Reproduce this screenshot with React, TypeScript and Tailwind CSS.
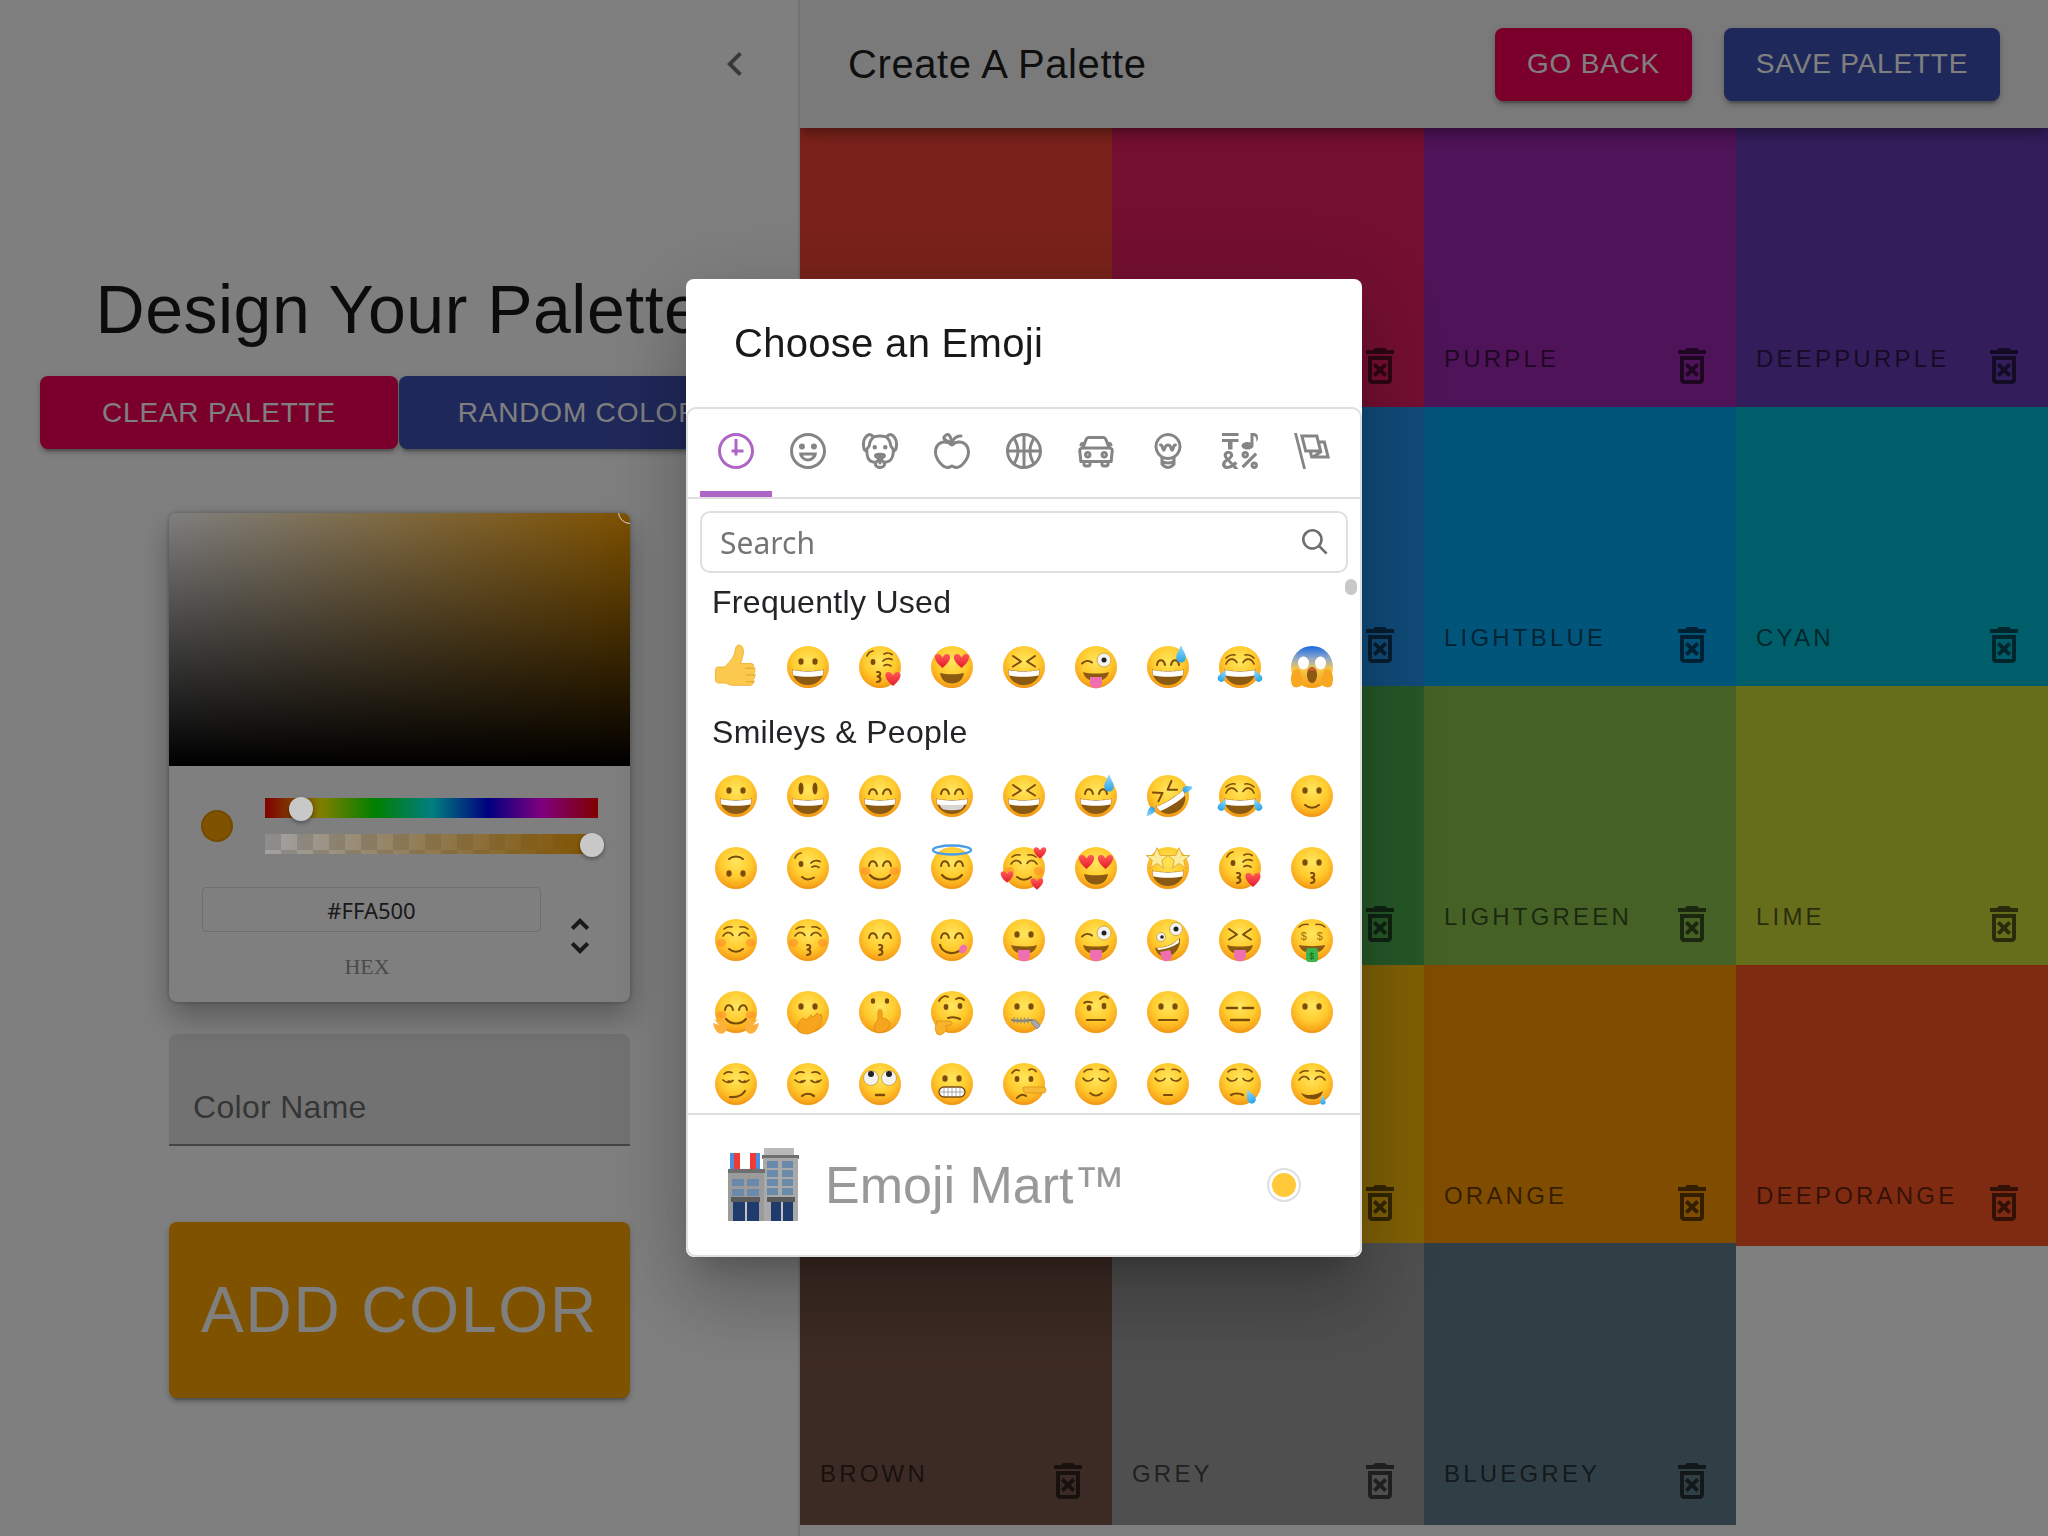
import type { ReactNode } from "react";

const BROWN = "#7b4c0b";
const BTN_SHADOW =
  "shadow-[0_6px_2px_-4px_rgba(0,0,0,0.2),0_4px_4px_0_rgba(0,0,0,0.14),0_2px_10px_0_rgba(0,0,0,0.12)]";

const COLORS: { name: string; bg: string }[] = [
  { name: "red", bg: "bg-[#f44336]" },
  { name: "pink", bg: "bg-[#e91e63]" },
  { name: "purple", bg: "bg-[#9c27b0]" },
  { name: "deeppurple", bg: "bg-[#673ab7]" },
  { name: "indigo", bg: "bg-[#3f51b5]" },
  { name: "blue", bg: "bg-[#2196f3]" },
  { name: "lightblue", bg: "bg-[#03a9f4]" },
  { name: "cyan", bg: "bg-[#00bcd4]" },
  { name: "teal", bg: "bg-[#009688]" },
  { name: "green", bg: "bg-[#4caf50]" },
  { name: "lightgreen", bg: "bg-[#8bc34a]" },
  { name: "lime", bg: "bg-[#cddc39]" },
  { name: "yellow", bg: "bg-[#ffeb3b]" },
  { name: "amber", bg: "bg-[#ffc107]" },
  { name: "orange", bg: "bg-[#ff9800]" },
  { name: "deeporange", bg: "bg-[#ff5722]" },
  { name: "brown", bg: "bg-[#795548]" },
  { name: "grey", bg: "bg-[#9e9e9e]" },
  { name: "bluegrey", bg: "bg-[#607d8b]" },
];

// emoji parts, all drawn on a 48 x 48 box with the face at 24,24 r21
function S({ d, w = 2, c = BROWN }: { d: string; w?: number; c?: string }) {
  return (
    <path d={d} fill="none" stroke={c} strokeWidth={w} strokeLinecap="round" strokeLinejoin="round" />
  );
}

function Heart({ x, y, s = 1 }: { x: number; y: number; s?: number }) {
  return (
    <path
      transform={`translate(${x} ${y}) scale(${s})`}
      d="M0 6C-8 0-8-6-4-6c2 0 3 1.500 4 3 1-1.500 2-3 4-3 4 0 4 6-4 12z"
      fill="url(#ej-heart)"
    />
  );
}

function Drop({ x, y, s = 1, r = 0 }: { x: number; y: number; s?: number; r?: number }) {
  return (
    <path
      transform={`translate(${x} ${y}) rotate(${r}) scale(${s})`}
      d="M0-9C2-4 4-2 4 1.500a4 4 0 0 1-8 0C-4-2-2-4 0-9z"
      fill="url(#ej-drop)"
    />
  );
}

function Star({ x, y }: { x: number; y: number }) {
  return (
    <polygon
      transform={`translate(${x} ${y}) scale(1.25)`}
      points="0,-9 2.600,-2.800 8.600,-2.800 3.800,1.100 5.300,7.300 0,3.600 -5.300,7.300 -3.800,1.100 -8.600,-2.800 -2.600,-2.800"
      fill="#fdeb9c"
      stroke="#e0a22c"
      strokeWidth={0.7}
    />
  );
}

const dots = (
  <g fill={BROWN}>
    <ellipse cx="17" cy="18.500" rx="2.600" ry="3.200" />
    <ellipse cx="31" cy="18.500" rx="2.600" ry="3.200" />
  </g>
);
const tall = (
  <g fill={BROWN}>
    <ellipse cx="17" cy="16.500" rx="2.500" ry="6" />
    <ellipse cx="31" cy="16.500" rx="2.500" ry="6" />
  </g>
);
const arcs = <S d="M13 22c.8-6.500 6.800-6.500 8 0M27 22c1.200-6.500 7.200-6.500 8 0" />;
const xs = <S d="M13 13l8 5.500-8 5M35 13l-8 5.500 8 5" />;
const joyEyes = <S d="M10 21c2.500-6 8-6.500 11-1.500M27 19.500c3-5 8.500-4.500 11 1.500M10 15c3-3 7-3.500 9-3M38 15c-3-3-7-3.500-9-3" w={1.600} />;
const closedUp = <S d="M11 20c3-4.500 7.500-4.500 10-.5M27 19.500c2.500-4 7-4 10 .5M12 13c3-2.500 6-2.500 8-2M36 13c-3-2.500-6-2.500-8-2" w={1.600} />;
const closedDown = <S d="M11 18c2.500 4 7.500 4 10 .5M27 18.500c2.500 3.500 7.500 3.500 10-.5M12 12c2-2.500 5-3 8-2.500M36 12c-2-2.500-5-3-8-2.500" w={1.600} />;
const cheeks = (
  <g fill="#ff8a2c" opacity={0.55}>
    <ellipse cx="9.500" cy="27" rx="5" ry="4" />
    <ellipse cx="38.500" cy="27" rx="5" ry="4" />
  </g>
);
const grin = (
  <>
    <path d="M8 26.500c6 2 26 2 32 0-.3 9.500-7 15.500-16 15.500S8.300 36 8 26.500z" fill="#8a5a12" />
    <path d="M8.500 27c6 1.900 25 1.900 31 0 0 2.200-.4 4-1 5.500-8 1.800-21 1.800-29 0-.6-1.500-1-3.300-1-5.500z" fill="#fff" />
  </>
);
const beamTeeth = <path d="M11.500 32.500c8 1.500 17 1.500 25 0-1 2.500-2.500 4-4 5-5 1-12 1-17 0-1.500-1-3-2.500-4-5z" fill="#d5d5d5" />;
const smallSmile = <S d="M17 33c4 3.500 10 3.500 14 0" />;
const wideSmile = <S d="M14 31c5 6 15 6 20 0" w={2.200} />;
const kiss = <S d="M23 29c4-.8 4.500 3.500.5 4.500 4 .8 4 5-.5 5.500" />;
const tongueMouth = (
  <>
    <path d="M11 29c6 2 20 2 26 0-1.500 6-6 9-13 9s-11.500-3-13-9z" fill="#8a5a12" />
    <path d="M18 34h12v5.500a6 6 0 0 1-12 0z" fill="#ef6fb0" />
  </>
);
const winkTongueEyes = (
  <>
    <S d="M10 20.500c3-3 7-3.500 10-1" />
    <circle cx="32" cy="17" r="7" fill="#f2f2f2" stroke="#c99a2e" strokeWidth={0.8} />
    <circle cx="32" cy="17" r="2.500" fill="#222" />
  </>
);
const kissWink = (
  <>
    <ellipse cx="17" cy="19" rx="2.400" ry="3" fill={BROWN} />
    <S d="M11 13c1-3 3-4.500 6-5M27 18c2-2.500 6-3 9-1.500M28 22.500c2-1 5-1 7 .5M28 11c3-1.500 6-1 8 .5" w={1.700} />
  </>
);

const FACES: Record<string, ReactNode> = {
  grinning: <>{dots}{grin}</>,
  smiley: <>{tall}{grin}</>,
  smile: <>{arcs}{grin}</>,
  beam: <>{arcs}{grin}{beamTeeth}</>,
  laughing: <>{xs}{grin}</>,
  sweat: <>{arcs}{grin}<Drop x={37} y={13} s={1.200} /></>,
  joy: <>{joyEyes}{grin}<Drop x={6} y={34} s={0.900} r={30} /><Drop x={42} y={34} s={0.900} r={-30} /></>,
  rofl: (
    <>
      <g transform="rotate(-32 24 24)">{xs}{grin}</g>
      <Drop x={43} y={17} s={0.800} r={70} />
      <Drop x={7} y={39} s={0.800} r={-140} />
    </>
  ),
  slight: <>{dots}{smallSmile}</>,
  upside: <g transform="rotate(180 24 24)">{dots}{smallSmile}</g>,
  wink: (
    <>
      <ellipse cx="17" cy="20" rx="2.400" ry="3" fill={BROWN} />
      <S d="M11 14c1-3 3-4.500 6-5M27 19c2-2.500 6-3 9-1.500M28 23c2-1 5-1 7 .5" w={1.700} />
      <S d="M18 33c3.500 3 8 3 12 .5" />
    </>
  ),
  blush: <>{cheeks}{arcs}{wideSmile}</>,
  halo: (
    <>
      {arcs}
      {wideSmile}
      <ellipse cx="24" cy="6" rx="19" ry="4.500" fill="none" stroke="#4a9be8" strokeWidth={2.400} />
    </>
  ),
  hearts: (
    <>
      {cheeks}
      {closedUp}
      {smallSmile}
      <Heart x={40} y={9} s={0.950} />
      <Heart x={7} y={33} s={0.950} />
      <Heart x={37} y={40} s={0.950} />
    </>
  ),
  heartEyes: (
    <>
      <path d="M12 30c6 1.800 18 1.800 24 0-1 6.500-5.500 10.500-12 10.500S13 36.500 12 30z" fill="#8a5a12" />
      <Heart x={14.500} y={18} s={1.150} />
      <Heart x={33.500} y={18} s={1.150} />
    </>
  ),
  star: <>{grin}<Star x={13} y={15} /><Star x={35} y={15} /></>,
  kissHeart: <>{kissWink}<S d="M21 29c4-.8 4.500 3.500.5 4.500 4 .8 4 5-.5 5.500" /><Heart x={37} y={36} s={1.150} /></>,
  kissing: <>{dots}{kiss}</>,
  relaxed: <>{cheeks}{closedUp}{smallSmile}</>,
  kissClosed: <>{cheeks}{closedUp}{kiss}</>,
  kissSmile: <>{arcs}{kiss}</>,
  yum: (
    <>
      {arcs}
      <S d="M12 29c3 9 15 11 23 3" w={2.200} />
      <ellipse cx="35" cy="33" rx="3.600" ry="4.500" transform="rotate(35 35 33)" fill="#ef6fb0" />
    </>
  ),
  tongue: <>{dots}{tongueMouth}</>,
  tongueWink: <>{winkTongueEyes}{tongueMouth}</>,
  zany: (
    <>
      <circle cx="17" cy="21" r="4.500" fill="#f2f2f2" stroke="#c99a2e" strokeWidth={0.8} />
      <circle cx="18" cy="21" r="1.800" fill="#222" />
      <circle cx="32" cy="13" r="6.500" fill="#f2f2f2" stroke="#c99a2e" strokeWidth={0.8} />
      <circle cx="32" cy="13" r="2.500" fill="#222" />
      <path d="M11 32c8 0 18-3 25-10 1 9-5 18-14 19-5 0-9-3-11-9z" fill="#8a5a12" />
      <path d="M13 32c8 0 16-3 22-9 0 1.500 0 3-.5 4-6 4-13 6-20 7z" fill="#fff" />
      <path d="M16 36l10-2 2 6a5.500 5.500 0 0 1-10 3z" fill="#ef6fb0" />
    </>
  ),
  squintTongue: <>{xs}{tongueMouth}</>,
  money: (
    <>
      <S d="M11 11c3-2.500 6-3 9-2.500M37 11c-3-2.500-6-3-9-2.500" w={1.500} />
      <text x="16" y="24" fontSize="11" fontFamily="Liberation Sans" textAnchor="middle" fill="#9a6a10">$</text>
      <text x="32" y="24" fontSize="11" fontFamily="Liberation Sans" textAnchor="middle" fill="#9a6a10">$</text>
      <path d="M11 29c6 1.500 20 1.500 26 0-1 5-6 8-13 8s-12-3-13-8z" fill="#8a5a12" />
      <rect x="18" y="32" width="12" height="14" rx="3" fill="#3eb54a" />
      <text x="24" y="42.500" fontSize="9" fontFamily="Liberation Sans" textAnchor="middle" fill="#145f1c">$</text>
    </>
  ),
  hug: (
    <>
      {cheeks}
      {arcs}
      {wideSmile}
      <path d="M1 35l6 2-5-6 7 3-3-6 7 6c3 3 3 8-1 11-4 2-9 0-11-10z" fill="#fbb13a" />
      <path d="M47 35l-6 2 5-6-7 3 3-6-7 6c-3 3-3 8 1 11 4 2 9 0 11-10z" fill="#fbb13a" />
    </>
  ),
  oops: (
    <>
      {dots}
      <path d="M14 43c-1-6 1-11 5-13l3 2 5-5 2 2 4-4 2 2 2-1 1 3c0 8-6 15-14 17-4 0-8-1-10-3z" fill="#f7a51e" stroke="#d98a16" strokeWidth={0.8} />
    </>
  ),
  shush: (
    <>
      <g fill={BROWN}>
        <ellipse cx="17" cy="13" rx="2.200" ry="2.800" />
        <ellipse cx="31" cy="13" rx="2.200" ry="2.800" />
      </g>
      <path d="M20 44c-3-4-1-9 2-12V24c0-3.500 4-3.500 4 0v6c5 1 8 3 8 6-1 4-4 7-7 8-2 1-5 1-7 0z" fill="#f7a51e" stroke="#d98a16" strokeWidth={0.9} />
    </>
  ),
  thinking: (
    <>
      <S d="M11 13c2-4 6-6 9-4M28 11c3-1.500 6-1 8 1" w={1.800} />
      <ellipse cx="18" cy="19" rx="2.400" ry="3" fill={BROWN} />
      <ellipse cx="32" cy="18" rx="2.400" ry="3" fill={BROWN} />
      <S d="M20 30c3-.8 8-.8 12 1" />
      <path d="M9 46c-2-4-2-7-1-10l1-3 12 0c3 0 4 3 2 4l-6 1 2 2c0 3-4 6-7 7z" fill="#f9b22c" stroke="#d98a16" strokeWidth={0.8} />
    </>
  ),
  zipper: (
    <>
      {dots}
      <S d="M12 32c6 1 14 1 20 0" w={2} c="#7d7d7d" />
      <S d="M14 29.500v5M17.500 30v5M21 30v5M24.500 30v5M28 30v5" w={1.200} c="#8d8d8d" />
      <rect x="33" y="32" width="5" height="9" rx="1.500" transform="rotate(-40 35 36)" fill="#a8a8a8" stroke="#777" strokeWidth={0.7} />
    </>
  ),
  raised: (
    <>
      <S d="M12 15c2-1.500 5-1.500 8-.5M28 11c2-3 6-3.500 8-1" w={1.800} />
      <ellipse cx="17" cy="20" rx="2.400" ry="3" fill={BROWN} />
      <ellipse cx="32" cy="18" rx="2.400" ry="3.200" fill={BROWN} />
      <S d="M15 32h18" w={2.200} />
    </>
  ),
  neutral: <>{dots}<S d="M15 32h18" w={2.200} /></>,
  expressionless: <><S d="M11 20h10M27 20h10M15 32h18" w={2.400} /></>,
  noMouth: dots,
  smirk: (
    <>
      <S d="M11 20c3 3 7 3 10 .5M27 20.500c3 2.500 7 2.500 10-.5M12 14c2-2 5-2.500 8-1.500M36 14c-2-2-5-2.500-8-1.500" w={1.700} />
      <ellipse cx="17" cy="21.500" rx="1.800" ry="1.200" fill={BROWN} />
      <ellipse cx="33" cy="21.500" rx="1.800" ry="1.200" fill={BROWN} />
      <S d="M18 37c6 .5 12-1 15-6" w={2.200} />
    </>
  ),
  unamused: (
    <>
      <S d="M11 20c3 3 7 3 10 .5M27 20.500c3 2.500 7 2.500 10-.5M12 14c2-2 5-2.500 8-1.500M36 14c-2-2-5-2.500-8-1.500" w={1.700} />
      <ellipse cx="18" cy="21.500" rx="1.800" ry="1.200" fill={BROWN} />
      <ellipse cx="34" cy="21.500" rx="1.800" ry="1.200" fill={BROWN} />
      <S d="M18 36c3-3 8-3 12 0" w={2.200} />
    </>
  ),
  roll: (
    <>
      <circle cx="15" cy="18" r="7.500" fill="#f2f2f2" stroke="#c99a2e" strokeWidth={0.8} />
      <circle cx="33" cy="18" r="7.500" fill="#f2f2f2" stroke="#c99a2e" strokeWidth={0.8} />
      <circle cx="15" cy="14" r="3" fill="#222" />
      <circle cx="33" cy="14" r="3" fill="#222" />
      <S d="M20 35h8" w={2.400} />
    </>
  ),
  grimace: (
    <>
      {dots}
      <rect x="11" y="27" width="26" height="10" rx="5" fill="#fff" stroke={BROWN} strokeWidth={1.400} />
      <S d="M12 32h24M16 27.500v9M20 27v10M24 27v10M28 27v10M32 27.500v9" w={0.700} c="#8c8c8c" />
    </>
  ),
  lying: (
    <>
      <S d="M12 13c2-3 5-3.500 7-2.500M29 10c2-1.500 5-1 7 1.500" w={1.700} />
      <ellipse cx="17" cy="19" rx="2.400" ry="3" fill={BROWN} />
      <ellipse cx="31" cy="19" rx="2.400" ry="3" fill={BROWN} />
      <S d="M17 38c3-4 7-4 9-2" />
      <path d="M24 27h20c2.500 0 2.500 6 0 6H26c-3 0-4-6-2-6z" fill="#f8b932" stroke="#d98a16" strokeWidth={0.7} />
    </>
  ),
  relieved: <>{closedDown}<S d="M18 33c4 3.500 8 3.500 12 0" w={1.800} /></>,
  pensive: <>{closedDown}<S d="M20 35h8" w={2.200} /></>,
  sleepy: (
    <>
      {closedDown}
      <S d="M15 35c3-2 9-2 12 0" w={2.200} />
      <Drop x={35} y={38} s={1.050} r={-25} />
    </>
  ),
  drool: (
    <>
      {closedUp}
      <path d="M13 33c5 3 15 3 22-2-2 7-7 9-12 8-5 0-8-3-10-6z" fill={BROWN} />
      <Drop x={35} y={41} s={0.650} />
    </>
  ),
};

function Thumb() {
  return (
    <svg viewBox="0 0 42 42" className="h-12 w-12">
      <path
        d="M3 24c0-2 1-3 3-3h5c3-3 8-8 9-13 .5-3 .5-5 2.500-6 3-1 5 2 5 5 0 4-1.500 8-2.500 11h9c3 0 3 3 2 4 2 1 2 4 .5 5 1.500 1.500 1 4-.5 5 1 2 0 5-2.500 5H18c-3 0-5-2-7-2H6c-2 0-3-1-3-3z"
        fill="#fcc94f"
        stroke="#eeb033"
        strokeWidth={0.8}
      />
      <S d="M29 22h9M30 28h8M30 34h7" w={0.9} c="#e3a12c" />
    </svg>
  );
}

function Scream() {
  return (
    <svg viewBox="0 0 48 48" className="h-12 w-12">
      <circle cx="24" cy="24" r="21" fill="url(#ej-scream)" />
      <ellipse cx="15.500" cy="20" rx="5.500" ry="6.500" fill="#fff" />
      <ellipse cx="32.500" cy="20" rx="5.500" ry="6.500" fill="#fff" />
      <ellipse cx="24" cy="32" rx="5" ry="8" fill="#8a5a12" />
      <path d="M24 25c3 0 4.500 2 4.500 3-3-1-6-1-9 0 0-1 1.500-3 4.500-3z" fill="#d9533a" />
      <path d="M4 42c-2-6-1-12 2-15 2-2 5-1 6 1l3 8c1 3 0 5-2 7-2 1-3 1-3 1-2 1-5 0-6-2z" fill="#f8a721" />
      <path d="M44 42c2-6 1-12-2-15-2-2-5-1-6 1l-3 8c-1 3 0 5 2 7 2 1 3 1 3 1 2 1 5 0 6-2z" fill="#f8a721" />
    </svg>
  );
}

function Emoji({ name }: { name: string }) {
  if (name === "thumb") return <Thumb />;
  if (name === "scream") return <Scream />;
  return (
    <svg viewBox="0 0 48 48" className="h-12 w-12">
      <circle cx="24" cy="24" r="21" fill="url(#ej-face)" />
      {FACES[name]}
    </svg>
  );
}

function Building() {
  return (
    <svg viewBox="0 0 72 73" className="h-[73px] w-[72px]">
      <rect x="37" y="0" width="30" height="9" fill="#b9b9b9" />
      <rect x="35" y="7" width="37" height="4" fill="#6f6f6f" />
      <rect x="36" y="10" width="35" height="63" fill="#a9a9a9" />
      <rect x="3" y="5" width="30" height="16" fill="#fff" />
      <rect x="3" y="5" width="4" height="16" fill="#4a8fe0" />
      <rect x="7" y="5" width="6" height="16" fill="#ef3b36" />
      <rect x="23" y="5" width="6" height="16" fill="#ef3b36" />
      <rect x="29" y="5" width="4" height="16" fill="#4a8fe0" />
      <rect x="1" y="21" width="37" height="4" fill="#6f6f6f" />
      <rect x="1" y="25" width="36" height="48" fill="#9b9b9b" />
      {[31, 41].map((y) => (
        <g key={y} fill="#6a8aab">
          <rect x="5" y={y} width="12" height="7" />
          <rect x="20" y={y} width="12" height="7" />
        </g>
      ))}
      {[13, 22, 31, 40].map((y) => (
        <g key={y} fill="#6a8aab">
          <rect x="40" y={y} width="11" height="7" />
          <rect x="55" y={y} width="11" height="7" />
        </g>
      ))}
      <rect x="4" y="49" width="29" height="5" fill="#5a5a5a" />
      <rect x="6" y="54" width="26" height="19" fill="#1f3b6e" />
      <rect x="18" y="54" width="2" height="19" fill="#c3c3c3" />
      <rect x="40" y="49" width="28" height="5" fill="#5a5a5a" />
      <rect x="44" y="54" width="22" height="19" fill="#1f3b6e" />
      <rect x="54" y="54" width="2" height="19" fill="#c3c3c3" />
    </svg>
  );
}

// emoji-mart category icons, 24 x 24
const ANCHORS: string[][] = [
  ["M13 4h-2l-.001 7H9v2h2v2h2v-2h4v-2h-4z", "M12 0C5.373 0 0 5.373 0 12s5.373 12 12 12 12-5.373 12-12S18.627 0 12 0m0 22C6.486 22 2 17.514 2 12S6.486 2 12 2s10 4.486 10 10-4.486 10-10 10"],
  ["M12 0C5.373 0 0 5.373 0 12s5.373 12 12 12 12-5.373 12-12S18.627 0 12 0m0 22C6.486 22 2 17.514 2 12S6.486 2 12 2s10 4.486 10 10-4.486 10-10 10", "M8 7a2 2 0 1 0-.001 3.999A2 2 0 0 0 8 7M16 7a2 2 0 1 0-.001 3.999A2 2 0 0 0 16 7M15.232 15c-.693 1.195-1.87 2-3.349 2-1.477 0-2.655-.805-3.347-2H15m3-2H6a6 6 0 1 0 12 0"],
  ["M15.5 8a1.5 1.5 0 1 0 .001 3.001A1.5 1.5 0 0 0 15.5 8M8.5 8a1.5 1.5 0 1 0 .001 3.001A1.5 1.5 0 0 0 8.5 8", "M18.933 0h-.027c-.97 0-2.138.787-3.018 1.497-1.274-.374-2.612-.51-3.887-.51-1.285 0-2.616.133-3.874.517C7.245.79 6.069 0 5.093 0h-.027C3.352 0 .07 2.67.002 7.026c-.039 2.479.276 4.238 1.04 5.013.254.258.882.677 1.295.882.191 3.177.922 5.238 2.536 6.38.897.637 2.187.949 3.2 1.102C8.04 20.6 8 20.795 8 21c0 1.773 2.35 3 4 3 1.648 0 4-1.227 4-3 0-.201-.038-.393-.072-.586 2.573-.385 5.435-1.877 5.925-7.587.396-.22.887-.568 1.104-.788.763-.774 1.079-2.534 1.04-5.013C23.929 2.67 20.646 0 18.933 0M3.223 9.135c-.237.281-.837 1.155-.884 1.238-.15-.41-.368-1.349-.337-3.291.051-3.281 2.478-4.972 3.091-5.031.256.015.731.27 1.265.646-1.11 1.171-2.275 2.915-2.352 5.125-.133.546-.398.858-.783 1.313M12 22c-.901 0-1.954-.693-2-1 0-.654.475-1.236 1-1.602V20a1 1 0 1 0 2 0v-.602c.524.365 1 .947 1 1.602-.046.307-1.099 1-2 1m3-3.48v.02a4.752 4.752 0 0 0-1.262-1.02c1.092-.516 2.239-1.334 2.239-2.217 0-1.842-1.781-2.195-3.977-2.195-2.196 0-3.978.354-3.978 2.195 0 .883 1.148 1.701 2.238 2.217A4.8 4.8 0 0 0 9 18.539v-.025c-1-.076-2.182-.281-2.973-.842-1.301-.92-1.838-3.045-1.853-6.478l.023-.041c.496-.826 1.49-1.45 1.804-3.102 0-2.047 1.357-3.631 2.362-4.522C9.37 3.178 10.555 3 11.948 3c1.447 0 2.685.192 3.733.57 1 .9 2.316 2.465 2.316 4.48.313 1.651 1.307 2.275 1.803 3.102.035.058.068.117.102.178-.059 5.967-1.949 7.01-4.902 7.19m6.628-8.202c-.037-.065-.074-.13-.113-.195a7.587 7.587 0 0 0-.739-.987c-.385-.455-.648-.768-.782-1.313-.076-2.209-1.241-3.954-2.353-5.124.531-.376 1.004-.63 1.261-.647.636.071 3.044 1.764 3.096 5.031.027 1.81-.347 3.218-.37 3.235"],
  ["M17 4.978c-1.838 0-2.876.396-3.68.934.513-1.172 1.768-2.934 4.68-2.934a1 1 0 0 0 0-2c-2.921 0-4.629 1.365-5.547 2.512-.064.078-.119.162-.18.244C11.73 1.838 10.798.023 9.207.023 8.579.022 7.85.306 7 .978 5.027 2.54 5.329 3.902 6.492 4.999 3.609 5.222 0 7.352 0 12.969c0 4.582 4.961 11.009 9 11.009 1.975 0 2.371-.486 3-1 .629.514 1.025 1 3 1 4.039 0 9-6.418 9-11 0-5.953-4.055-8-7-8M8.242 2.546c.641-.508.943-.523.965-.523.426.169.975 1.405 1.357 3.055-1.527-.629-2.741-1.352-2.98-1.846.059-.112.241-.356.658-.686M15 21.978c-1.08 0-1.21-.109-1.559-.402l-.176-.146c-.367-.302-.816-.452-1.266-.452s-.898.15-1.266.452l-.176.146c-.347.292-.477.402-1.557.402-2.813 0-7-5.389-7-9.009 0-5.823 4.488-5.991 5-5.991 1.939 0 2.484.471 3.387 1.251l.323.276a1.995 1.995 0 0 0 2.58 0l.323-.276c.902-.78 1.447-1.251 3.387-1.251.512 0 5 .168 5 6 0 3.617-4.187 9-7 9"],
  ["M12 0C5.373 0 0 5.372 0 12c0 6.627 5.373 12 12 12 6.628 0 12-5.373 12-12 0-6.628-5.372-12-12-12m9.949 11H17.05c.224-2.527 1.232-4.773 1.968-6.113A9.966 9.966 0 0 1 21.949 11M13 11V2.051a9.945 9.945 0 0 1 4.432 1.564c-.858 1.491-2.156 4.22-2.392 7.385H13zm-2 0H8.961c-.238-3.165-1.536-5.894-2.393-7.385A9.95 9.95 0 0 1 11 2.051V11zm0 2v8.949a9.937 9.937 0 0 1-4.432-1.564c.857-1.492 2.155-4.221 2.393-7.385H11zm4.04 0c.236 3.164 1.534 5.893 2.392 7.385A9.92 9.92 0 0 1 13 21.949V13h2.04zM4.982 4.887C5.718 6.227 6.726 8.473 6.951 11h-4.9a9.977 9.977 0 0 1 2.931-6.113M2.051 13h4.9c-.226 2.527-1.233 4.771-1.969 6.113A9.972 9.972 0 0 1 2.051 13m16.967 6.113c-.735-1.342-1.744-3.586-1.968-6.113h4.899a9.961 9.961 0 0 1-2.931 6.113"],
  ["M6.5 12C5.122 12 4 13.121 4 14.5S5.122 17 6.5 17 9 15.879 9 14.5 7.878 12 6.5 12m0 3c-.275 0-.5-.225-.5-.5s.225-.5.5-.5.5.225.5.5-.225.5-.5.5M17.5 12c-1.378 0-2.5 1.121-2.5 2.5s1.122 2.5 2.5 2.5 2.5-1.121 2.5-2.5-1.122-2.5-2.5-2.5m0 3c-.275 0-.5-.225-.5-.5s.225-.5.5-.5.5.225.5.5-.225.5-.5.5", "M22.482 9.494l-1.039-.346L21.4 9h.6c.552 0 1-.439 1-.992 0-.006-.003-.008-.003-.008H23c0-1-.889-2-1.984-2h-.642l-.731-1.717C19.262 3.012 18.091 2 16.764 2H7.236C5.909 2 4.738 3.012 4.357 4.283L3.626 6h-.642C1.889 6 1 7 1 8h.003S1 8.002 1 8.008C1 8.561 1.448 9 2 9h.6l-.043.148-1.039.346a2.001 2.001 0 0 0-1.359 2.097l.751 7.508a1 1 0 0 0 .994.901H3v1c0 1.103.896 2 2 2h2c1.104 0 2-.897 2-2v-1h6v1c0 1.103.896 2 2 2h2c1.104 0 2-.897 2-2v-1h1.096a.999.999 0 0 0 .994-.901l.751-7.508a2.001 2.001 0 0 0-1.359-2.097M6.273 4.857C6.402 4.43 6.788 4 7.236 4h9.527c.448 0 .834.43.963.857L19.313 9H4.688l1.585-4.143zM7 21H5v-1h2v1zm12 0h-2v-1h2v1zm2.189-3H2.811l-.662-6.607L3 11h18l.852.393L21.189 18z"],
  ["M12 0a9 9 0 0 0-5 16.482V21s2.035 3 5 3 5-3 5-3v-4.518A9 9 0 0 0 12 0zm0 2c3.86 0 7 3.141 7 7s-3.14 7-7 7-7-3.141-7-7 3.14-7 7-7zM9 17.477c.94.332 1.946.523 3 .523s2.06-.19 3-.523v.834c-.91.436-1.925.689-3 .689a6.924 6.924 0 0 1-3-.69v-.833zm.236 3.07A8.854 8.854 0 0 0 12 21c.965 0 1.888-.167 2.758-.451C14.155 21.173 13.153 22 12 22c-1.102 0-2.117-.789-2.764-1.453z", "M14.745 12.449h-.004c-.852-.024-1.188-.858-1.577-1.824-.421-1.061-.703-1.561-1.182-1.566h-.009c-.481 0-.783.497-1.235 1.537-.436.982-.801 1.811-1.636 1.791l-.276-.043c-.565-.171-.853-.691-1.284-1.794-.125-.313-.202-.632-.27-.913-.051-.213-.127-.53-.195-.634C7.067 9.004 7.039 9 6.99 9A1 1 0 0 1 7 7h.01c1.662.017 2.015 1.373 2.198 2.134.486-.981 1.304-2.058 2.797-2.075 1.531.018 2.28 1.153 2.731 2.141l.002-.008C14.944 8.424 15.327 7 16.979 7h.032A1 1 0 1 1 17 9h-.011c-.149.076-.256.474-.319.709a6.484 6.484 0 0 1-.311.951c-.429.973-.79 1.789-1.614 1.789"],
  ["M0 0h11v2H0zM4 11h3V6h4V4H0v2h4zM15.5 17c1.381 0 2.5-1.116 2.5-2.493s-1.119-2.493-2.5-2.493S13 13.13 13 14.507 14.119 17 15.5 17m0-2.986c.276 0 .5.222.5.493 0 .272-.224.493-.5.493s-.5-.221-.5-.493.224-.493.5-.493M21.5 19.014c-1.381 0-2.5 1.116-2.5 2.493S20.119 24 21.5 24s2.5-1.116 2.5-2.493-1.119-2.493-2.5-2.493m0 2.986a.497.497 0 0 1-.5-.493c0-.271.224-.493.5-.493s.5.222.5.493a.497.497 0 0 1-.5.493M22 13l-9 9 1.513 1.5 8.99-9.009zM17 11c2.209 0 4-1.119 4-2.5V2s.985-.161 1.498.949C23.01 4.055 23 6 23 6s1-1.119 1-3.135C24-.02 21 0 21 0h-2v6.347A5.853 5.853 0 0 0 17 6c-2.209 0-4 1.119-4 2.5s1.791 2.5 4 2.5M10.297 20.482l-1.475-1.585a47.54 47.54 0 0 1-1.442 1.129c-.307-.288-.989-1.016-2.045-2.183.902-.836 1.479-1.466 1.729-1.892s.376-.871.376-1.336c0-.592-.273-1.178-.818-1.759-.546-.581-1.329-.871-2.349-.871-1.008 0-1.79.293-2.344.879-.556.587-.832 1.181-.832 1.784 0 .813.419 1.748 1.256 2.805-.847.614-1.444 1.208-1.794 1.784a3.465 3.465 0 0 0-.523 1.833c0 .857.308 1.56.924 2.107.616.549 1.423.823 2.42.823 1.173 0 2.444-.379 3.813-1.137L8.235 24h2.819l-2.09-2.383 1.333-1.135zm-6.736-6.389a1.02 1.02 0 0 1 .73-.286c.31 0 .559.085.747.254a.849.849 0 0 1 .283.659c0 .518-.419 1.112-1.257 1.784-.536-.651-.805-1.231-.805-1.742a.901.901 0 0 1 .302-.669M3.74 22c-.427 0-.778-.116-1.057-.349-.279-.232-.418-.487-.418-.766 0-.594.509-1.288 1.527-2.083.968 1.134 1.717 1.946 2.248 2.438-.921.507-1.686.76-2.3.76"],
  ["M0 0l6.084 24H8L1.916 0zM21 5h-4l-1-4H4l3 12h3l1 4h13L21 5zM6.563 3h7.875l2 8H8.563l-2-8zm8.832 10l-2.856 1.904L12.063 13h3.332zM19 13l-1.5-6h1.938l2 8H16l3-2z"],
];

const FREQUENT = ["thumb", "grinning", "kissHeart", "heartEyes", "laughing", "tongueWink", "sweat", "joy", "scream"];
const SMILEYS = [
  "grinning", "smiley", "smile", "beam", "laughing", "sweat", "rofl", "joy", "slight",
  "upside", "wink", "blush", "halo", "hearts", "heartEyes", "star", "kissHeart", "kissing",
  "relaxed", "kissClosed", "kissSmile", "yum", "tongue", "tongueWink", "zany", "squintTongue", "money",
  "hug", "oops", "shush", "thinking", "zipper", "raised", "neutral", "expressionless", "noMouth",
  "smirk", "unamused", "roll", "grimace", "lying", "relieved", "pensive", "sleepy", "drool",
];

function EmojiGrid({ names }: { names: string[] }) {
  return (
    <div className="grid grid-cols-[repeat(9,72px)] auto-rows-[72px] pl-3">
      {names.map((name, index) => (
        <div key={index} className="flex items-center justify-center">
          <Emoji name={name} />
        </div>
      ))}
    </div>
  );
}

function EmojiDefs() {
  return (
    <svg className="absolute h-0 w-0">
      <defs>
        <radialGradient id="ej-face" cx="50%" cy="36%" r="66%">
          <stop offset="0%" stopColor="#ffe65e" />
          <stop offset="55%" stopColor="#ffcb2d" />
          <stop offset="85%" stopColor="#f9a81b" />
          <stop offset="100%" stopColor="#ea8c10" />
        </radialGradient>
        <linearGradient id="ej-scream" x1="0" y1="0" x2="0" y2="1">
          <stop offset="0%" stopColor="#1668e0" />
          <stop offset="30%" stopColor="#93aac8" />
          <stop offset="55%" stopColor="#f6c84a" />
          <stop offset="100%" stopColor="#f49c14" />
        </linearGradient>
        <linearGradient id="ej-heart" x1="0" y1="0" x2="0" y2="1">
          <stop offset="0%" stopColor="#ff5a5a" />
          <stop offset="100%" stopColor="#e31b2b" />
        </linearGradient>
        <linearGradient id="ej-drop" x1="0" y1="0" x2="0" y2="1">
          <stop offset="0%" stopColor="#93dcff" />
          <stop offset="100%" stopColor="#2ba3e6" />
        </linearGradient>
      </defs>
    </svg>
  );
}

function ColorBox({ name, bg }: { name: string; bg: string }) {
  const tallBox = name === "deeporange" ? "h-[281px] self-start" : "";
  return (
    <div className={`flex items-start justify-between px-5 pt-[213.5px] ${bg} ${tallBox}`}>
      <span className="mt-[3px] text-[24px] uppercase leading-7 tracking-[3.2px] text-black/60">{name}</span>
      <svg viewBox="0 0 24 24" className="h-12 w-12 shrink-0 fill-black/60">
        <path d="M14.12 10.47L12 12.59l-2.13-2.12-1.41 1.41L10.59 14l-2.12 2.12 1.41 1.41L12 15.41l2.12 2.12 1.41-1.41L13.41 14l2.12-2.12zM15.5 4l-1-1h-5l-1 1H5v2h14V4zM6 19c0 1.100.9 2 2 2h8c1.100 0 2-.9 2-2V7H6v12zM8 9h8v10H8V9z" />
      </svg>
    </div>
  );
}

function ColorPicker() {
  return (
    <div className="mx-[169px] h-[489px] w-[461px] rounded-lg bg-white shadow-[0_0_4px_rgba(0,0,0,0.3),0_16px_32px_rgba(0,0,0,0.3)]">
      <div className="relative h-[253px] overflow-hidden rounded-t-lg bg-[linear-gradient(to_top,#000,transparent),linear-gradient(to_right,#fff,#ffa500)]">
        <div className="absolute right-[-12px] top-[-13px] z-50 h-6 w-6 rounded-full border border-[#d8d8d8]" />
      </div>
      <div className="flex items-center gap-8 pl-8 pr-8 pt-8">
        <div className="h-8 w-8 rounded-full bg-[#ffa500] shadow-[inset_0_0_0_2px_rgba(0,0,0,0.1)]" />
        <div className="flex flex-1 flex-col gap-4">
          <div className="relative h-5 bg-[linear-gradient(to_right,#f00_0%,#ff0_17%,#0f0_33%,#0ff_50%,#00f_67%,#f0f_83%,#f00_100%)]">
            <div className="absolute left-6 top-[-1px] z-50 h-6 w-6 rounded-full bg-[#c8c8c8] shadow-[0_2px_4px_rgba(0,0,0,0.37)]" />
          </div>
          {/* this strip stays light under the backdrop, so it sits above it with its final colours */}
          <div className="relative z-50 h-5 [background-image:linear-gradient(to_right,rgba(128,83,0,0),#805300),repeating-conic-gradient(#a2a2a2_0_25%,#8e8e8e_0_50%)] [background-size:100%_100%,32px_32px]">
            <div className="absolute left-[315px] top-[-1px] h-6 w-6 rounded-full bg-[#c8c8c8] shadow-[0_2px_4px_rgba(0,0,0,0.37)]" />
          </div>
        </div>
      </div>
      <div className="flex items-start pl-[33px] pt-[33px]">
        <div className="w-[339px]">
          <input
            readOnly
            value="#FFA500"
            className="h-[45px] w-full rounded border-[1.5px] border-[#dadada] text-center font-['Noto_Sans',sans-serif] text-[22px] text-[#333] outline-none"
          />
          <div className="mt-[22px] pr-[9px] text-center font-['Liberation_Serif',serif] text-[22px] leading-[25px] text-[#969696]">
            HEX
          </div>
        </div>
        <svg viewBox="0 0 24 24" className="ml-[15px] mt-[25px] h-12 w-12 fill-[#333]">
          <path d="M12 18.170L8.830 15 7.420 16.410 12 21l4.590-4.590L15.170 15M12 5.830L15.170 9l1.410-1.410L12 3 7.410 7.590 8.830 9 12 5.830z" />
        </svg>
      </div>
    </div>
  );
}

function Sidebar() {
  return (
    <aside className="w-[800px] shrink-0 border-r-2 border-black/10 bg-white">
      <div className="flex h-32 items-center justify-end pr-[39px]">
        <svg viewBox="0 0 24 24" className="h-12 w-12 fill-black/55">
          <path d="M15.410 7.410L14 6l-6 6 6 6 1.410-1.410L10.830 12z" />
        </svg>
      </div>
      <h1 className="mt-[141px] whitespace-nowrap text-center text-[68px] font-normal leading-[80px] tracking-[0.5px] text-black/90">
        Design Your Palette
      </h1>
      <div className={"mx-10 mt-[27px] flex gap-px text-[28px] uppercase tracking-[0.8px] text-white"}>
        <div className={`flex h-[73px] w-[359px] items-center justify-center rounded-lg bg-[#f50057] ${BTN_SHADOW}`}>
          Clear Palette
        </div>
        <div className={`flex h-[73px] w-[360px] items-center justify-center rounded-lg bg-[#3f51b5] ${BTN_SHADOW}`}>
          Random Color
        </div>
      </div>
      <div className="mt-16">
        <ColorPicker />
      </div>
      <div className="mx-[169px] mt-8 flex h-[112px] w-[461px] items-end rounded-t-lg border-b-2 border-black/40 bg-black/10 pb-[13px] pl-6 text-[32px] leading-[48px] tracking-[0.3px] text-black/55">
        Color Name
      </div>
      <div className={`mx-[169px] mt-[76px] flex h-[176px] w-[461px] items-center justify-center rounded-lg bg-[#ffa500] text-[64px] uppercase tracking-[1.83px] text-white ${BTN_SHADOW}`}>
        Add Color
      </div>
    </aside>
  );
}

function EmojiPicker() {
  return (
    <div className="h-[850px] overflow-hidden rounded-[10px] border-2 border-[#dfdfdf] bg-white">
      <div className="flex h-[88px] px-3">
        {ANCHORS.map((paths, index) => (
          <div key={index} className="relative flex h-full w-[72px] justify-center pt-6">
            <svg viewBox="0 0 24 24" className={`h-9 w-9 ${index === 0 ? "fill-[#ae65c5]" : "fill-[#858585]"}`}>
              {paths.map((d) => (
                <path key={d} d={d} />
              ))}
            </svg>
            {index === 0 && <div className="absolute inset-x-0 bottom-0 h-1.5 bg-[#ae65c5]" />}
          </div>
        ))}
      </div>
      <div className="border-t-2 border-[#dfdfdf] px-3 pb-[2px] pt-3">
        <div className="relative">
          <input
            readOnly
            placeholder="Search"
            className="h-[62px] w-full rounded-[10px] border-2 border-[#dfdfdf] pl-[18px] font-['Noto_Sans',sans-serif] text-[30px] outline-none placeholder:text-[#757575]"
          />
          <svg viewBox="0 0 20 20" className="absolute right-5 top-[18px] h-[26px] w-[26px] fill-[#6e6e6e]">
            <path d="M12.900 14.320a8 8 0 1 1 1.410-1.410l5.350 5.330-1.420 1.420-5.340-5.340zM8 14A6 6 0 1 0 8 2a6 6 0 0 0 0 12z" />
          </svg>
        </div>
      </div>
      <div className="relative h-[538px] overflow-hidden text-[32px] tracking-[0.3px] text-[#222427]">
        <div className="absolute right-[3px] top-1 h-4 w-3 rounded-md bg-[#c8c8c8]" />
        <div className="h-14 pl-6 pt-[9px] leading-9">Frequently Used</div>
        <EmojiGrid names={FREQUENT} />
        <div className="h-[57px] pl-6 pt-[11px] leading-9">{"Smileys & People"}</div>
        <EmojiGrid names={SMILEYS} />
      </div>
      <div className="flex h-[141px] items-center justify-between border-t-2 border-[#dfdfdf] pl-[39px] pr-[59px]">
        <div className="flex items-center gap-[26px]">
          <Building />
          <span className="text-[52px] text-[#999]">Emoji Mart™</span>
        </div>
        <div className="flex h-[34px] w-[34px] items-center justify-center rounded-full border-2 border-[#dfdfdf] bg-white">
          <div className="h-6 w-6 rounded-full bg-[#ffc93a]" />
        </div>
      </div>
    </div>
  );
}

export default function App() {
  return (
    <div className="flex h-[1536px] w-[2048px] overflow-hidden bg-white font-['Liberation_Sans',Arial,sans-serif]">
      <EmojiDefs />
      <Sidebar />
      <main className="flex flex-1 flex-col overflow-hidden">
        <header className="relative z-10 flex h-32 shrink-0 items-center justify-between bg-[#f5f5f5] px-12 shadow-[0_4px_8px_-2px_rgba(0,0,0,0.2),0_8px_10px_0_rgba(0,0,0,0.14),0_2px_20px_0_rgba(0,0,0,0.12)]">
          <div className="text-[40px] tracking-[0.6px] text-black/90">Create A Palette</div>
          <div className="flex gap-8 text-[28px] uppercase tracking-[0.8px] text-white">
            <div className={`flex h-[73px] w-[197px] items-center justify-center rounded-lg bg-[#f50057] ${BTN_SHADOW}`}>
              Go Back
            </div>
            <div className={`flex h-[73px] w-[276px] items-center justify-center rounded-lg bg-[#3f51b5] ${BTN_SHADOW}`}>
              Save Palette
            </div>
          </div>
        </header>
        <div className="grid grid-cols-4 grid-rows-[279px_279px_279px_278px_282px]">
          {COLORS.map((color) => (
            <ColorBox key={color.name} name={color.name} bg={color.bg} />
          ))}
        </div>
      </main>
      <div className="fixed inset-0 z-40 flex items-center justify-center bg-black/50">
        <div className="h-[978px] w-[676px] overflow-hidden rounded-lg bg-white shadow-[0_22px_30px_-14px_rgba(0,0,0,0.2),0_48px_76px_6px_rgba(0,0,0,0.14),0_18px_92px_16px_rgba(0,0,0,0.12)]">
          <h2 className="px-12 py-8 text-[40px] font-normal leading-[64px] tracking-[0.3px] text-black/90">Choose an Emoji</h2>
          <EmojiPicker />
        </div>
      </div>
    </div>
  );
}
